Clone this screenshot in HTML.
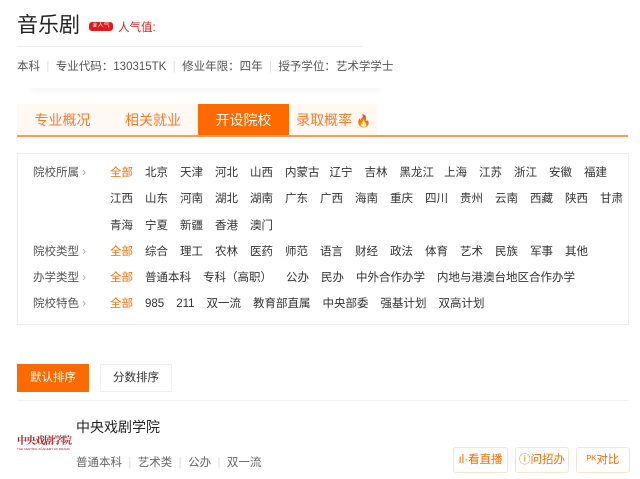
<!DOCTYPE html>
<html><head><meta charset="utf-8"><style>
body{margin:0;width:640px;height:479px;background:#fff;font-family:"Liberation Sans","Noto Sans CJK SC",sans-serif;color:#333;position:relative;overflow:hidden}
.a{position:absolute;white-space:nowrap}
.row{position:absolute;left:110px;font-size:11.5px;color:#333;display:flex;align-items:center;height:16px;line-height:16px}
.row span{margin-right:12px}
.row span.o{color:#ff6a00}
.lab{position:absolute;left:33px;font-size:11.5px;color:#555;line-height:16px}
.lab:after{content:" ›";color:#aaa}
.tab{position:absolute;top:104px;height:32px;line-height:32px;text-align:center;font-size:14px;color:#ff7a2a;background:#fff8f3}
.btn{position:absolute;top:447px;height:24px;line-height:24px;border:1px solid #ffe1cf;border-radius:3px;font-size:11.5px;color:#ff6a00;text-align:center}
</style></head><body>
<div class="a" style="left:17px;top:9px;font-size:21px;color:#222">音乐剧</div>
<div class="a" style="left:89px;top:22px;width:24px;height:9px;background:#e8191a;border-radius:3px;color:#fff;font-size:6px;line-height:9px;text-align:center">♛人气</div>
<div class="a" style="left:118px;top:19px;font-size:11.5px;color:#e8191a">人气值:</div>
<div class="a" style="left:17px;top:46px;width:346px;height:1px;background:#eee"></div>
<div class="a" style="left:17px;top:58px;font-size:11.5px;color:#555">本科 <span style="color:#ddd">&nbsp;|&nbsp;</span> 专业代码：130315TK <span style="color:#ddd">&nbsp;|&nbsp;</span> 修业年限：四年 <span style="color:#ddd">&nbsp;|&nbsp;</span> 授予学位：艺术学学士</div>
<div class="a" style="left:30px;top:82px;width:350px;height:6px;box-shadow:0 4px 6px rgba(0,0,0,.04)"></div>
<div class="tab" style="left:17px;width:91px">专业概况</div>
<div class="tab" style="left:108px;width:90px">相关就业</div>
<div class="tab" style="left:198px;width:91px;background:#ff6a00;color:#fff">开设院校</div>
<div class="tab" style="left:289px;width:89px">录取概率 <span style="color:#ff4a00;font-size:12px">🔥</span></div>
<div class="a" style="left:17px;top:135px;width:611px;height:2px;background:#ff9a55"></div>
<div class="a" style="left:17px;top:153px;width:610px;height:170px;border:1px solid #eee"></div>
<div class="lab" style="top:165px">院校所属</div>
<div class="row" style="top:165px"><span class="o">全部</span><span>北京</span><span>天津</span><span>河北</span><span>山西</span><span style="margin-right:10px">内蒙古</span><span>辽宁</span><span>吉林</span><span style="margin-right:10px">黑龙江</span><span>上海</span><span>江苏</span><span>浙江</span><span>安徽</span><span>福建</span></div>
<div class="row" style="top:191px"><span>江西</span><span>山东</span><span>河南</span><span>湖北</span><span>湖南</span><span>广东</span><span>广西</span><span>海南</span><span>重庆</span><span>四川</span><span>贵州</span><span>云南</span><span>西藏</span><span>陕西</span><span>甘肃</span></div>
<div class="row" style="top:218px"><span>青海</span><span>宁夏</span><span>新疆</span><span>香港</span><span>澳门</span></div>
<div class="lab" style="top:244px">院校类型</div>
<div class="row" style="top:244px"><span class="o">全部</span><span>综合</span><span>理工</span><span>农林</span><span>医药</span><span>师范</span><span>语言</span><span>财经</span><span>政法</span><span>体育</span><span>艺术</span><span>民族</span><span>军事</span><span>其他</span></div>
<div class="lab" style="top:270px">办学类型</div>
<div class="row" style="top:270px"><span class="o">全部</span><span>普通本科</span><span style="margin-right:14px">专科（高职）</span><span>公办</span><span>民办</span><span>中外合作办学</span><span>内地与港澳台地区合作办学</span></div>
<div class="lab" style="top:296px">院校特色</div>
<div class="row" style="top:296px"><span class="o">全部</span><span>985</span><span>211</span><span>双一流</span><span>教育部直属</span><span>中央部委</span><span>强基计划</span><span>双高计划</span></div>
<div class="a" style="left:17px;top:364px;width:72px;height:28px;line-height:28px;background:#ff6a00;color:#fff;font-size:11.5px;text-align:center">默认排序</div>
<div class="a" style="left:100px;top:364px;width:70px;height:26px;line-height:26px;border:1px solid #eee;font-size:11.5px;text-align:center;color:#333">分数排序</div>
<div class="a" style="left:17px;top:400px;width:611px;height:1px;background:#f0f0f0"></div>
<div class="a" style="left:17px;top:432px;font-size:10px;color:#b01c20;font-family:'Noto Serif CJK SC',serif;font-weight:bold;letter-spacing:-1px">中央戏剧学院</div>
<div class="a" style="left:17px;top:447px;font-size:3px;color:#b01c20">THE CENTRAL ACADEMY OF DRAMA</div>
<div class="a" style="left:76px;top:417px;font-size:14px;color:#222">中央戏剧学院</div>
<div class="a" style="left:76px;top:454px;font-size:11.5px;color:#666">普通本科 <span style="color:#ddd">&nbsp;|&nbsp;</span> 艺术类 <span style="color:#ddd">&nbsp;|&nbsp;</span> 公办 <span style="color:#ddd">&nbsp;|&nbsp;</span> 双一流</div>
<div class="btn" style="left:453px;width:53px">ıl·看直播</div>
<div class="btn" style="left:515px;width:52px">ⓘ问招办</div>
<div class="btn" style="left:576px;width:52px">ᴾᴷ对比</div>
</body></html>
